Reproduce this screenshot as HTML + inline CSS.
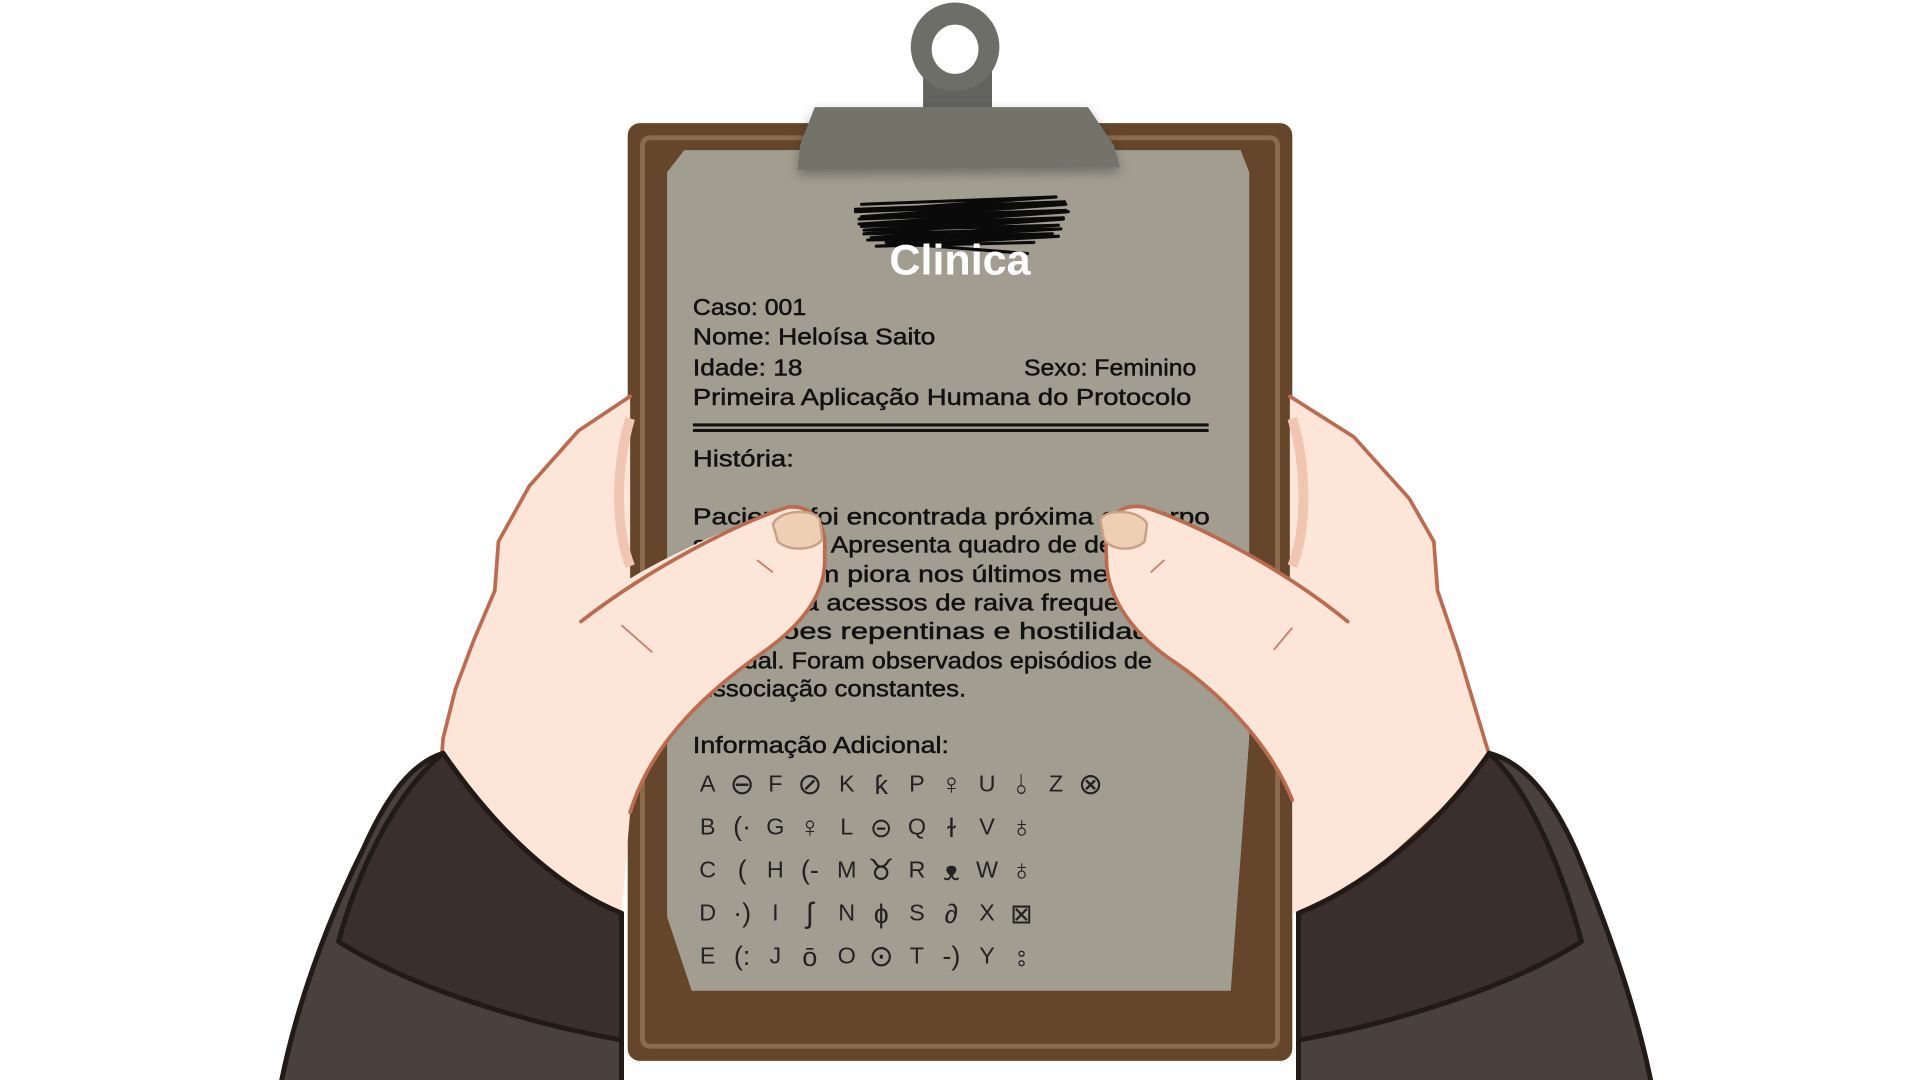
<!DOCTYPE html>
<html><head><meta charset="utf-8"><style>
html,body{margin:0;padding:0;background:#fff;width:1920px;height:1080px;overflow:hidden}
svg{display:block}
text{font-family:"Liberation Sans","DejaVu Sans",sans-serif}
</style></head><body>
<svg width="1920" height="1080" viewBox="0 0 1560 877.5" xmlns="http://www.w3.org/2000/svg">
<defs>
<filter id="sh" x="-10%" y="-30%" width="120%" height="170%"><feDropShadow dx="0" dy="4" stdDeviation="5" flood-color="#000" flood-opacity="0.3"/></filter>
</defs>
<rect width="1560" height="877.5" fill="#fff"/>
<!-- board -->
<rect x="510" y="100" width="540" height="762" rx="10" fill="#65462b"/>
<rect x="522" y="112" width="516" height="738" rx="6" fill="none" stroke="#8c6a4c" stroke-width="4"/>
<rect x="530" y="120" width="500" height="722" rx="4" fill="#65462b"/>
<!-- paper -->
<polygon points="556,122 1008,122 1015,140 1015,600 1000,805 562,805 542,745 542,140" fill="#a19e91"/>
<!-- clip -->
<rect x="750" y="40" width="56" height="56" fill="#64645e"/>
<circle cx="776" cy="38" r="36" fill="#6d6e68"/>
<ellipse cx="776" cy="40" rx="19" ry="20" fill="#fff"/>
<polygon points="662,87 884,87 905,118 910,136 648,138 650,118" fill="#73736b" filter="url(#sh)"/>
<!-- scribble -->
<g stroke="#0a0a0a" stroke-width="2.5" fill="none" stroke-linecap="round" stroke-linejoin="round">
<path d="M700,166 L858,160 L695,172 L866,166 L698,178 L868,172 L700,184 L864,178 L702,190 L862,186 L705,195 L860,192 L712,200 L840,197"/>
<path d="M695,170 L865,164 L700,176 L866,171 L698,182 L864,177 L702,187 L860,183 L708,193 L855,190 L720,197 L835,206"/>
</g>
<text x="780" y="223" font-size="35" font-weight="bold" fill="#fff" text-anchor="middle">Clinica</text>
<!-- text -->
<g font-size="19" fill="#111" stroke="#111" stroke-width="0.4" lengthAdjust="spacingAndGlyphs">
<text x="563" y="256" textLength="92" lengthAdjust="spacingAndGlyphs">Caso: 001</text>
<text x="563" y="280" textLength="197" lengthAdjust="spacingAndGlyphs">Nome: Heloísa Saito</text>
<text x="563" y="305" textLength="89" lengthAdjust="spacingAndGlyphs">Idade: 18</text>
<text x="832" y="305" textLength="140" lengthAdjust="spacingAndGlyphs">Sexo: Feminino</text>
<text x="563" y="329" textLength="405" lengthAdjust="spacingAndGlyphs">Primeira Aplicação Humana do Protocolo</text>
<text x="563" y="379" textLength="82" lengthAdjust="spacingAndGlyphs">História:</text>
<text x="563" y="426" textLength="420" lengthAdjust="spacingAndGlyphs">Paciente foi encontrada próxima ao corpo</text>
<text x="563" y="449" textLength="418" lengthAdjust="spacingAndGlyphs">sangrando. Apresenta quadro de depressão</text>
<text x="563" y="473" textLength="380" lengthAdjust="spacingAndGlyphs">severa com piora nos últimos meses.</text>
<text x="563" y="496" textLength="395" lengthAdjust="spacingAndGlyphs">Apresenta acessos de raiva frequentes,</text>
<text x="563" y="519" textLength="385" lengthAdjust="spacingAndGlyphs">explosões repentinas e hostilidade</text>
<text x="563" y="543" textLength="373" lengthAdjust="spacingAndGlyphs">gradual. Foram observados episódios de</text>
<text x="563" y="566" textLength="222" lengthAdjust="spacingAndGlyphs">dissociação constantes.</text>
<text x="563" y="612" textLength="208" lengthAdjust="spacingAndGlyphs">Informação Adicional:</text>
</g>
<rect x="563" y="344" width="419" height="2.5" fill="#111"/>
<rect x="563" y="348.5" width="419" height="2.5" fill="#111"/>
<g font-size="19" fill="#222" text-anchor="middle">
<text x="575" y="643">A</text><text x="603" y="645" font-size="24">⊖</text><text x="630" y="643">F</text><text x="658" y="645" font-size="24">⊘</text><text x="688" y="643">K</text><text x="716" y="645" font-size="22">ƙ</text><text x="745" y="643">P</text><text x="773" y="645" font-size="24">♀</text><text x="802" y="643">U</text><text x="830" y="645" font-size="22">⫰</text><text x="858" y="643">Z</text><text x="886" y="645" font-size="24">⊗</text>
<text x="575" y="678">B</text><text x="603" y="679" font-size="22">(·</text><text x="630" y="678">G</text><text x="658" y="680" font-size="24">♀</text><text x="688" y="678">L</text><text x="716" y="680" font-size="22">⊝</text><text x="745" y="678">Q</text><text x="773" y="680" font-size="22">ɫ</text><text x="802" y="678">V</text><text x="830" y="680" font-size="24">♁</text>
<text x="575" y="713">C</text><text x="603" y="714" font-size="22">(</text><text x="630" y="713">H</text><text x="658" y="714" font-size="22">(-</text><text x="688" y="713">M</text><text x="716" y="715" font-size="24">♉</text><text x="745" y="713">R</text><text x="773" y="715" font-size="22">ᴥ</text><text x="802" y="713">W</text><text x="830" y="715" font-size="24">♁</text>
<text x="575" y="748">D</text><text x="603" y="749" font-size="22">·)</text><text x="630" y="748">I</text><text x="658" y="750" font-size="24">ʃ</text><text x="688" y="748">N</text><text x="716" y="750" font-size="22">ɸ</text><text x="745" y="748">S</text><text x="773" y="750" font-size="22">∂</text><text x="802" y="748">X</text><text x="830" y="750" font-size="22">⊠</text>
<text x="575" y="783">E</text><text x="603" y="784" font-size="22">(:</text><text x="630" y="783">J</text><text x="658" y="785" font-size="22">ō</text><text x="688" y="783">O</text><text x="716" y="785" font-size="24">⊙</text><text x="745" y="783">T</text><text x="773" y="784" font-size="22">-)</text><text x="802" y="783">Y</text><text x="830" y="785" font-size="22">⦂</text>
</g>
<!-- hands fill -->
<g fill="#fde6d7">
<path d="M512,322 L470,350 L430,395 L405,440 L402,480 L385,520 L370,560 L360,600 L358,625 L400,680 L460,725 L505,742 L512,660 C530,600 580,558 620,530 C655,505 672,480 670,450 C672,425 660,410 640,412 C600,425 545,450 512,470 Z"/>
<path d="M1048,322 L1100,355 L1145,405 L1165,440 L1168,480 L1185,530 L1200,580 L1212,620 L1170,660 L1110,715 L1070,740 L1050,742 L1050,650 C1030,600 985,558 950,535 C915,510 898,480 899,452 C897,425 905,408 930,412 C970,425 1020,450 1048,470 Z"/>
</g>
<g fill="none" stroke="#bb6b50" stroke-width="3" stroke-linejoin="round" stroke-linecap="round">
<path d="M512,322 L470,350 L430,395 L405,440 L402,480 L385,520 L370,560 L360,600 L358,625 L400,680 L460,725 L505,742"/>
<path d="M512,660 C530,600 580,558 620,530 C655,505 672,480 670,450 C672,425 660,410 640,412 C600,425 530,460 472,505"/>
<path d="M1048,322 L1100,355 L1145,405 L1165,440 L1168,480 L1185,530 L1200,580 L1212,620 L1170,660 L1110,715 L1055,742"/>
<path d="M1050,650 C1030,600 985,558 950,535 C915,510 898,480 899,452 C897,425 905,408 930,412 C970,425 1040,460 1095,505"/>
</g>
<path d="M512,340 C500,380 500,430 512,460" stroke="#f0c6b2" stroke-width="8" fill="none"/>
<path d="M1050,340 C1062,380 1062,430 1050,460" stroke="#f0c6b2" stroke-width="8" fill="none"/>
<path d="M628,426 C632,415 660,412 666,422 L668,438 C662,448 640,448 632,440 Z" fill="#efcfb3" stroke="#c9a286" stroke-width="2"/>
<path d="M932,426 C928,415 900,412 894,422 L897,438 C903,448 922,448 930,440 Z" fill="#efcfb3" stroke="#c9a286" stroke-width="2"/>
<g stroke="#c4806a" stroke-width="1.5" fill="none">
<path d="M615,455 L628,465 M505,508 L530,530 M946,455 L935,465 M1050,510 L1035,528"/>
</g>
<!-- sleeves -->
<g stroke="#221a17" stroke-width="4" stroke-linejoin="round">
<path d="M228,882 C240,820 265,750 295,690 C315,645 335,620 360,612 C400,670 450,720 505,742 L505,882 Z" fill="#4a403c"/>
<path d="M275,765 C290,710 320,645 360,612 C400,670 450,720 505,742 L505,845 C420,830 330,800 275,765 Z" fill="#3a2f2c"/>
<path d="M1342,882 C1330,820 1305,750 1280,690 C1262,650 1240,620 1210,612 C1170,670 1110,720 1055,742 L1055,882 Z" fill="#4a403c"/>
<path d="M1285,765 C1270,710 1245,645 1210,612 C1170,670 1110,720 1055,742 L1055,845 C1140,830 1230,800 1285,765 Z" fill="#3a2f2c"/>
</g>
</svg>
</body></html>
